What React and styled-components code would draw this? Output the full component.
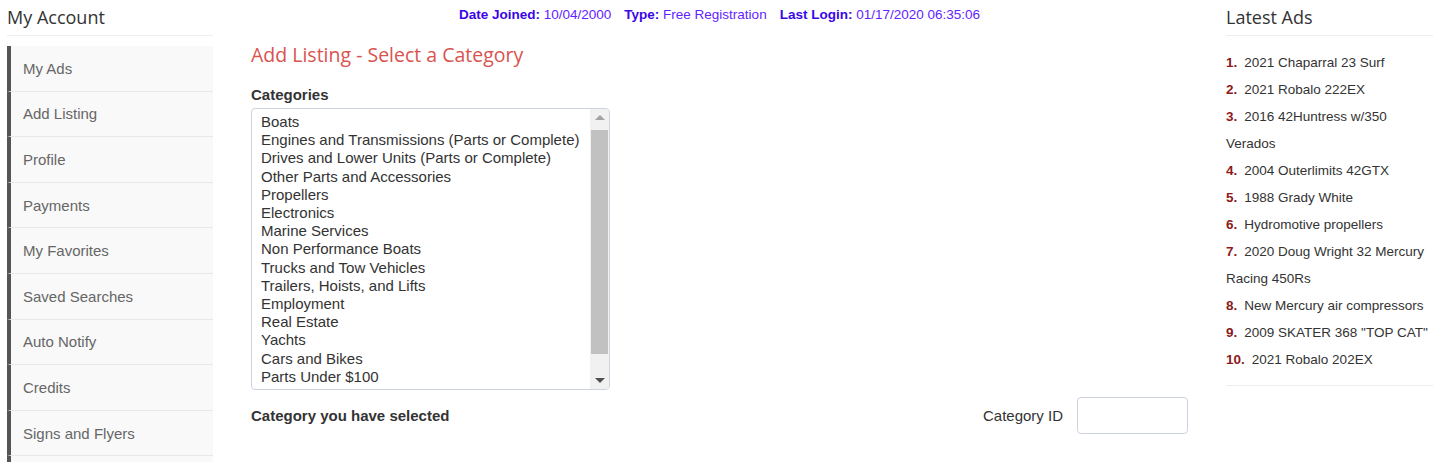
import React from "react";
import styled, { createGlobalStyle } from "styled-components";

const GlobalStyle = createGlobalStyle`
  body {
    margin: 0;
    background: #fff;
    font-family: "Liberation Sans", Arial, sans-serif;
    color: #333;
  }
`;

const Page = styled.div`
  display: grid;
  grid-template-columns: 206px 937px 207px;
  column-gap: 38px;
  padding-left: 7px;
  width: 1433px;
  height: 462px;
  box-sizing: border-box;
  overflow: hidden;
`;

const SideHeading = styled.h3`
  margin: 0;
  padding: 5px 0 6px;
  font-family: "Open Sans", sans-serif;
  font-weight: 400;
  font-size: 18px;
  line-height: 24px;
  color: #333;
  border-bottom: 1px solid #eee;
`;

const Menu = styled.nav`
  margin-top: 10px;
  display: flex;
  flex-direction: column;
`;

const MenuItem = styled.a`
  display: flex;
  align-items: center;
  height: 45.6px;
  box-sizing: border-box;
  padding-left: 12px;
  background: #f9f9f9;
  border-left: 4px solid #555;
  border-bottom: 1px solid #e8e8e8;
  color: #666;
  font-size: 15px;
  text-decoration: none;
`;

const Main = styled.main`
  display: flex;
  flex-direction: column;
`;

const InfoBar = styled.div`
  padding-top: 7px;
  text-align: center;
  font-size: 13.5px;
  line-height: 16px;
`;

const InfoLabel = styled.b`
  color: #3a06e8;
  margin-left: ${p => (p.$first ? "0" : "13px")};
`;

const InfoValue = styled.span`
  color: #5f24ff;
`;

const Title = styled.h2`
  margin: 20px 0 0;
  font-family: "Open Sans", sans-serif;
  font-weight: 400;
  font-size: 19.5px;
  line-height: 24px;
  color: #d9534f;
`;

const FieldLabel = styled.label`
  display: block;
  margin-top: 19px;
  font-weight: 700;
  font-size: 15px;
  line-height: 18px;
  color: #333;
`;

const ListBox = styled.div`
  margin-top: 4px;
  width: 359px;
  height: 282px;
  box-sizing: border-box;
  border: 1px solid #ccd3df;
  border-radius: 4px;
  display: flex;
  overflow: hidden;
`;

const Options = styled.ul`
  flex: 1;
  margin: 0;
  padding: 4px 0 0 9px;
  list-style: none;
  overflow: hidden;
`;

const Option = styled.li`
  font-size: 15px;
  line-height: 18.2px;
  color: #333;
  white-space: nowrap;
`;

const ScrollBar = styled.div`
  width: 19px;
  background: #f1f1f1;
  display: flex;
  flex-direction: column;
  align-items: center;
`;

const Arrow = styled.div`
  height: 17px;
  display: flex;
  align-items: center;
  justify-content: center;
  &::after {
    content: "";
    width: 0;
    height: 0;
    border-left: 5px solid transparent;
    border-right: 5px solid transparent;
    ${p =>
      p.$down
        ? "border-top: 5px solid #505050;"
        : "border-bottom: 5px solid #a3a3a3;"}
  }
`;

const Track = styled.div`
  flex: 1;
  padding-top: 4px;
  align-self: stretch;
  display: flex;
  justify-content: center;
`;

const Thumb = styled.div`
  width: 17px;
  height: 224px;
  background: #c1c1c1;
`;

const BottomRow = styled.div`
  margin-top: 7px;
  display: flex;
  align-items: center;
  justify-content: space-between;
`;

const SelectedLabel = styled.span`
  font-weight: 700;
  font-size: 15px;
  color: #333;
`;

const IdGroup = styled.div`
  display: flex;
  align-items: center;
  gap: 14px;
  font-size: 15px;
  color: #333;
`;

const IdInput = styled.input`
  width: 111px;
  height: 37px;
  box-sizing: border-box;
  border: 1px solid #ccd3df;
  border-radius: 4px;
  padding: 6px 12px;
  font-size: 14px;
`;

const AdList = styled.ol`
  margin: 0;
  padding: 12.5px 0 12px;
  list-style: none;
  border-bottom: 1px solid #eee;
`;

const Ad = styled.li`
  font-size: 13.5px;
  line-height: 27px;
  color: #333;
`;

const AdNum = styled.b`
  color: #8b1a1a;
  margin-right: 7px;
`;

const menu = [
  "My Ads",
  "Add Listing",
  "Profile",
  "Payments",
  "My Favorites",
  "Saved Searches",
  "Auto Notify",
  "Credits",
  "Signs and Flyers",
  "Logout",
];

const categories = [
  "Boats",
  "Engines and Transmissions (Parts or Complete)",
  "Drives and Lower Units (Parts or Complete)",
  "Other Parts and Accessories",
  "Propellers",
  "Electronics",
  "Marine Services",
  "Non Performance Boats",
  "Trucks and Tow Vehicles",
  "Trailers, Hoists, and Lifts",
  "Employment",
  "Real Estate",
  "Yachts",
  "Cars and Bikes",
  "Parts Under $100",
  "Accessories and Supplies",
];

const ads = [
  "2021 Chaparral 23 Surf",
  "2021 Robalo 222EX",
  "2016 42Huntress w/350 Verados",
  "2004 Outerlimits 42GTX",
  "1988 Grady White",
  "Hydromotive propellers",
  "2020 Doug Wright 32 Mercury Racing 450Rs",
  "New Mercury air compressors",
  '2009 SKATER 368 "TOP CAT"',
  "2021 Robalo 202EX",
];

export default function App() {
  return (
    <>
      <GlobalStyle />
      <Page>
        <aside>
          <SideHeading>My Account</SideHeading>
          <Menu>
            {menu.map(m => (
              <MenuItem key={m} href="#">{m}</MenuItem>
            ))}
          </Menu>
        </aside>

        <Main>
          <InfoBar>
            <InfoLabel $first>Date Joined:</InfoLabel> <InfoValue>10/04/2000</InfoValue>
            <InfoLabel>Type:</InfoLabel> <InfoValue>Free Registration</InfoValue>
            <InfoLabel>Last Login:</InfoLabel> <InfoValue>01/17/2020 06:35:06</InfoValue>
          </InfoBar>
          <Title>Add Listing - Select a Category</Title>
          <FieldLabel>Categories</FieldLabel>
          <ListBox>
            <Options>
              {categories.map(c => (
                <Option key={c}>{c}</Option>
              ))}
            </Options>
            <ScrollBar>
              <Arrow />
              <Track>
                <Thumb />
              </Track>
              <Arrow $down />
            </ScrollBar>
          </ListBox>
          <BottomRow>
            <SelectedLabel>Category you have selected</SelectedLabel>
            <IdGroup>
              Category ID
              <IdInput type="text" />
            </IdGroup>
          </BottomRow>
        </Main>

        <aside>
          <SideHeading>Latest Ads</SideHeading>
          <AdList>
            {ads.map((a, i) => (
              <Ad key={i}>
                <AdNum>{i + 1}.</AdNum>
                {a}
              </Ad>
            ))}
          </AdList>
        </aside>
      </Page>
    </>
  );
}
